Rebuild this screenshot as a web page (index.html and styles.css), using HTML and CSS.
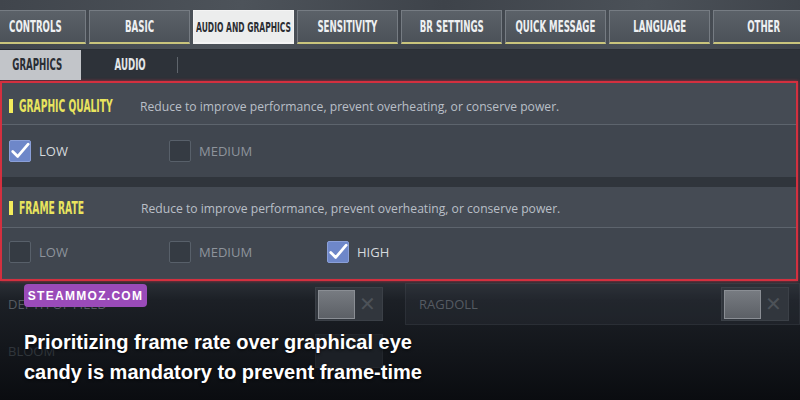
FILE: index.html
```html
<!DOCTYPE html>
<html>
<head>
<meta charset="utf-8">
<link rel="stylesheet" href="styles.css">
</head>
<body>
<div class="screen">
  <div class="topbar">
    <nav class="tabs">
      <div class="tab"><span class="cond">CONTROLS</span></div>
      <div class="tab"><span class="cond">BASIC</span></div>
      <div class="tab active"><span class="cond">AUDIO AND GRAPHICS</span></div>
      <div class="tab"><span class="cond">SENSITIVITY</span></div>
      <div class="tab"><span class="cond">BR SETTINGS</span></div>
      <div class="tab"><span class="cond">QUICK MESSAGE</span></div>
      <div class="tab"><span class="cond">LANGUAGE</span></div>
      <div class="tab"><span class="cond">OTHER</span></div>
    </nav>
  </div>
  <div class="subtabs">
    <div class="subtab active"><span class="cond">GRAPHICS</span></div>
    <div class="subtab"><span class="cond">AUDIO</span></div>
  </div>
  <div class="redbox">
    <section class="group">
      <div class="ghead">
        <span class="gbar"></span>
        <span class="gtitle"><span class="cond">GRAPHIC QUALITY</span></span>
        <span class="gdesc">Reduce to improve performance, prevent overheating, or conserve power.</span>
      </div>
      <div class="gopts first">
        <div class="opt on"><span class="box"><svg viewBox="0 0 22 22"><path d="M3 11.5 L8.5 17 L20 3.5" fill="none" stroke="#fff" stroke-width="3" stroke-linecap="round" stroke-linejoin="round"/></svg></span><span class="olabel">LOW</span></div>
        <div class="opt"><span class="box"></span><span class="olabel">MEDIUM</span></div>
      </div>
    </section>
    <div class="band"></div>
    <section class="group">
      <div class="ghead second">
        <span class="gbar"></span>
        <span class="gtitle"><span class="cond">FRAME RATE</span></span>
        <span class="gdesc">Reduce to improve performance, prevent overheating, or conserve power.</span>
      </div>
      <div class="gopts second">
        <div class="opt"><span class="box"></span><span class="olabel">LOW</span></div>
        <div class="opt"><span class="box"></span><span class="olabel">MEDIUM</span></div>
        <div class="opt on"><span class="box"><svg viewBox="0 0 22 22"><path d="M3 11.5 L8.5 17 L20 3.5" fill="none" stroke="#fff" stroke-width="3" stroke-linecap="round" stroke-linejoin="round"/></svg></span><span class="olabel">HIGH</span></div>
      </div>
    </section>
  </div>
  <div class="below">
    <div class="srow">
      <div class="scell"><span class="slabel">DEPTH OF FIELD</span><span class="toggle"><span class="knob"></span><span class="xmark">✕</span></span></div>
      <div class="scell framed"><span class="slabel">RAGDOLL</span><span class="toggle"><span class="knob"></span><span class="xmark">✕</span></span></div>
    </div>
    <div class="srow dim">
      <div class="scell"><span class="slabel">BLOOM</span><span class="toggle ghost"></span></div>
      <div class="scell"></div>
    </div>
  </div>
  <div class="badge">STEAMMOZ.COM</div>
  <p class="caption">Prioritizing frame rate over graphical eye<br>candy is mandatory to prevent frame-time</p>
</div>
</body>
</html>
```
FILE: styles.css
```css
* { box-sizing: border-box; }
html, body { margin: 0; padding: 0; }
body { width: 800px; height: 400px; overflow: hidden; background: #0c0e12; }
.screen {
  position: relative;
  width: 800px; height: 400px; overflow: hidden;
  background: linear-gradient(#3e434a 0, #2e333a 60px, #2c3138 280px, #1c2026 300px, #0a0c10 400px);
  font-family: "Open Sans", "DejaVu Sans", sans-serif;
}
.cond {
  display: inline-block;
  font-family: "Liberation Sans Narrow", "DejaVu Sans Condensed", sans-serif;
  font-weight: bold;
  transform: scaleX(0.62);
  white-space: nowrap;
}
.topbar {
  padding-top: 10px;
  height: 50px;
  background: linear-gradient(100deg, #40454c 0%, #4d535a 30%, #3e434a 55%, #4b5158 80%, #3f444b 100%);
  border-bottom: 1px solid #2a2e34;
}
.tabs { display: flex; gap: 3px; margin-left: -15px; }
.tab {
  flex: 0 0 101px; min-width: 0;
  height: 34px;
  display: flex; align-items: center; justify-content: center;
  background: linear-gradient(#5b6168, #4c5259);
  border: 1px solid #767c83;
  border-bottom: 2px solid #c9c47c;
  color: #eef0f2;
  font-size: 15.5px;
}
.tab.active { background: #eceded; border-color: #f4f4f4; color: #2b2e33; font-size: 13.6px; }
.subtabs {
  display: flex; height: 30px;
  background: #2d3239;
}
.subtab {
  width: 95px; min-width: 0; display: flex; align-items: center; justify-content: center;
  color: #e3e6e9; font-size: 15.5px; position: relative;
}
.subtab.active { width: 88px; margin-left: -7px; margin-right: 2px; background: #c2c5c9; color: #2a2e34; }
.subtab:not(.active)::after {
  content: ""; position: absolute; right: 0; top: 7px; bottom: 7px; width: 1px; background: #5f656c;
}
.redbox {
  width: 798px; height: 200px;
  margin-top: 1px;
  border: 2px solid #d3303f;
  box-shadow: 0 0 3px rgba(220, 40, 60, .7);
  background: #434952;
}
.ghead {
  height: 42px;
  display: flex; align-items: center;
  padding-left: 7px; padding-top: 5px;
  background: #454b54;
  border-bottom: 1px solid #5d646d;
}
.ghead.second { height: 41px; padding-top: 2px; }
.gbar { width: 4px; height: 14px; background: #f2ec5c; margin-right: 6px; }
.gtitle { color: #e9e45e; font-size: 17px; width: 121px; display: flex; }
.gtitle .cond { transform-origin: left center; transform: scaleX(0.6); }
.gdesc { color: #b9bfc7; font-size: 12.15px; }
.ghead.second .gdesc { margin-left: 1px; }
.gopts {
  height: 52px; display: flex; align-items: center; padding-left: 7px;
  background: #40464f;
}
.gopts.second { height: 50px; padding-bottom: 3px; }
.opt { width: 160px; display: flex; align-items: center; gap: 8px; }
.opt:nth-child(2) { width: 158px; }
.box {
  width: 22px; height: 22px; border-radius: 2px;
  background: #353b43; border: 1px solid #58606a;
  display: flex; align-items: center; justify-content: center;
}
.box svg { width: 20px; height: 20px; }
.opt.on .box { background: #6e87c9; border-color: #8a9fd8; }
.olabel { color: #8e949c; font-size: 13px; }
.opt.on .olabel { color: #d6dade; }
.band { height: 10px; background: #30353c; }
.below { padding-top: 2px; }
.srow { display: grid; grid-template-columns: 400px 400px; height: 42px; }
.scell { position: relative; display: flex; align-items: center; padding-left: 8px; }
.scell.framed { margin-left: 5px; padding-left: 13px; background: rgba(60, 66, 74, .2); border: 1px solid rgba(90, 96, 104, .2); }
.slabel { color: #555b62; font-size: 13px; flex: 1; font-family: "Open Sans", sans-serif; }
.toggle {
  width: 68px; height: 34px; margin-right: 17px;
  background: #31363d; border: 1px solid #3b4047;
  display: flex; align-items: center; padding-left: 2px; gap: 4px;
}
.scell.framed .toggle { margin-right: 10px; }
.knob { width: 37px; height: 29px; background: linear-gradient(#777b81, #5c6066); border: 1px solid #8a8e94; }
.xmark { color: #4d5258; font-size: 20px; line-height: 1; }
.srow.dim { height: 40px; margin-top: 6px; }
.srow.dim .slabel { color: #30353b; }
.toggle.ghost { background: #1c2026; border-color: #22262c; }
.badge {
  position: absolute; left: 24px; top: 284px;
  width: 123px; height: 23px; border-radius: 4px;
  background: #9a4bb9;
  color: #fff; font-family: "Liberation Sans", Arial, sans-serif; font-weight: bold;
  font-size: 12px; letter-spacing: 1.3px;
  display: flex; align-items: center; justify-content: center;
}
.caption {
  position: absolute; left: 24px; top: 327px; margin: 0;
  color: #fff; font-family: "Liberation Sans", Arial, sans-serif; font-weight: bold;
  font-size: 20px; line-height: 30px;
  text-shadow: 0 1px 3px rgba(0, 0, 0, .8);
}
```
